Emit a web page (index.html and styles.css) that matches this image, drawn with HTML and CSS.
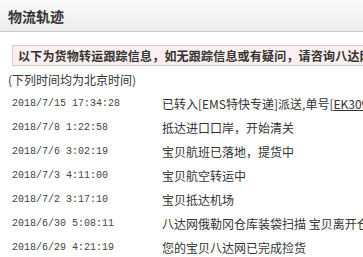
FILE: index.html
```html
<!DOCTYPE html>
<html lang="zh-CN">
<head>
<meta charset="utf-8">
<title>物流轨迹</title>
<link rel="stylesheet" href="styles.css">
</head>
<body>
<div class="header"><h1 class="title">物流轨迹</h1></div>
<div class="content">
  <div class="notice">以下为货物转运跟踪信息，如无跟踪信息或有疑问，请咨询八达网</div>
  <div class="tz">(下列时间均为北京时间)</div>
  <div class="track">
    <div class="row"><span class="time">2018/7/15 17:34:28</span><span class="desc">已转入[EMS特快专递]派送,单号[<span class="link">EK309</span></span></div>
    <div class="row"><span class="time">2018/7/8 1:22:58</span><span class="desc">抵达进口口岸，开始清关</span></div>
    <div class="row"><span class="time">2018/7/6 3:02:19</span><span class="desc">宝贝航班已落地，提货中</span></div>
    <div class="row"><span class="time">2018/7/3 4:11:00</span><span class="desc">宝贝航空转运中</span></div>
    <div class="row"><span class="time">2018/7/2 3:17:10</span><span class="desc">宝贝抵达机场</span></div>
    <div class="row"><span class="time">2018/6/30 5:08:11</span><span class="desc">八达网俄勒冈仓库装袋扫描 宝贝离开仓</span></div>
    <div class="row"><span class="time">2018/6/29 4:21:19</span><span class="desc">您的宝贝八达网已完成捡货</span></div>
  </div>
</div>
</body>
</html>
```
FILE: styles.css
```css
html, body {
  margin: 0;
  padding: 0;
  background: #fff;
  overflow: hidden;
}
body {
  width: 363px;
  height: 257px;
  font-family: "Noto Sans CJK SC", "Noto Sans", sans-serif;
  color: #333;
  white-space: nowrap;
}
.header {
  height: 31px;
  border-bottom: 1px solid #c9c9c9;
  background: linear-gradient(#fbfbfb, #ececec);
  padding-left: 8px;
  display: flex;
  align-items: center;
}
.title {
  margin: 0;
  font-size: 14px;
  font-weight: bold;
  color: #333;
  line-height: 16px;
}
.content {
  padding-top: 13px;
}
.notice {
  margin-left: 12px;
  height: 19px;
  line-height: 19px;
  border: 1px solid #dcc9c9;
  border-right: none;
  background: #fbefef;
  padding-left: 5px;
  font-size: 12px;
  font-weight: bold;
  letter-spacing: 0.2px;
  color: #333;
  overflow: hidden;
}
.tz {
  margin-top: 5px;
  margin-left: 8px;
  font-size: 12px;
  line-height: 18px;
  color: #333;
}
.track {
  margin-top: 2px;
  display: flex;
  flex-direction: column;
}
.row {
  height: 24px;
  display: flex;
  align-items: center;
  padding-left: 12px;
}
.time {
  flex: 0 0 150px;
  font-family: "Liberation Mono", monospace;
  font-size: 10px;
  color: #444;
}
.desc {
  font-size: 12px;
  color: #333;
}
.link {
  text-decoration: underline;
}
```
